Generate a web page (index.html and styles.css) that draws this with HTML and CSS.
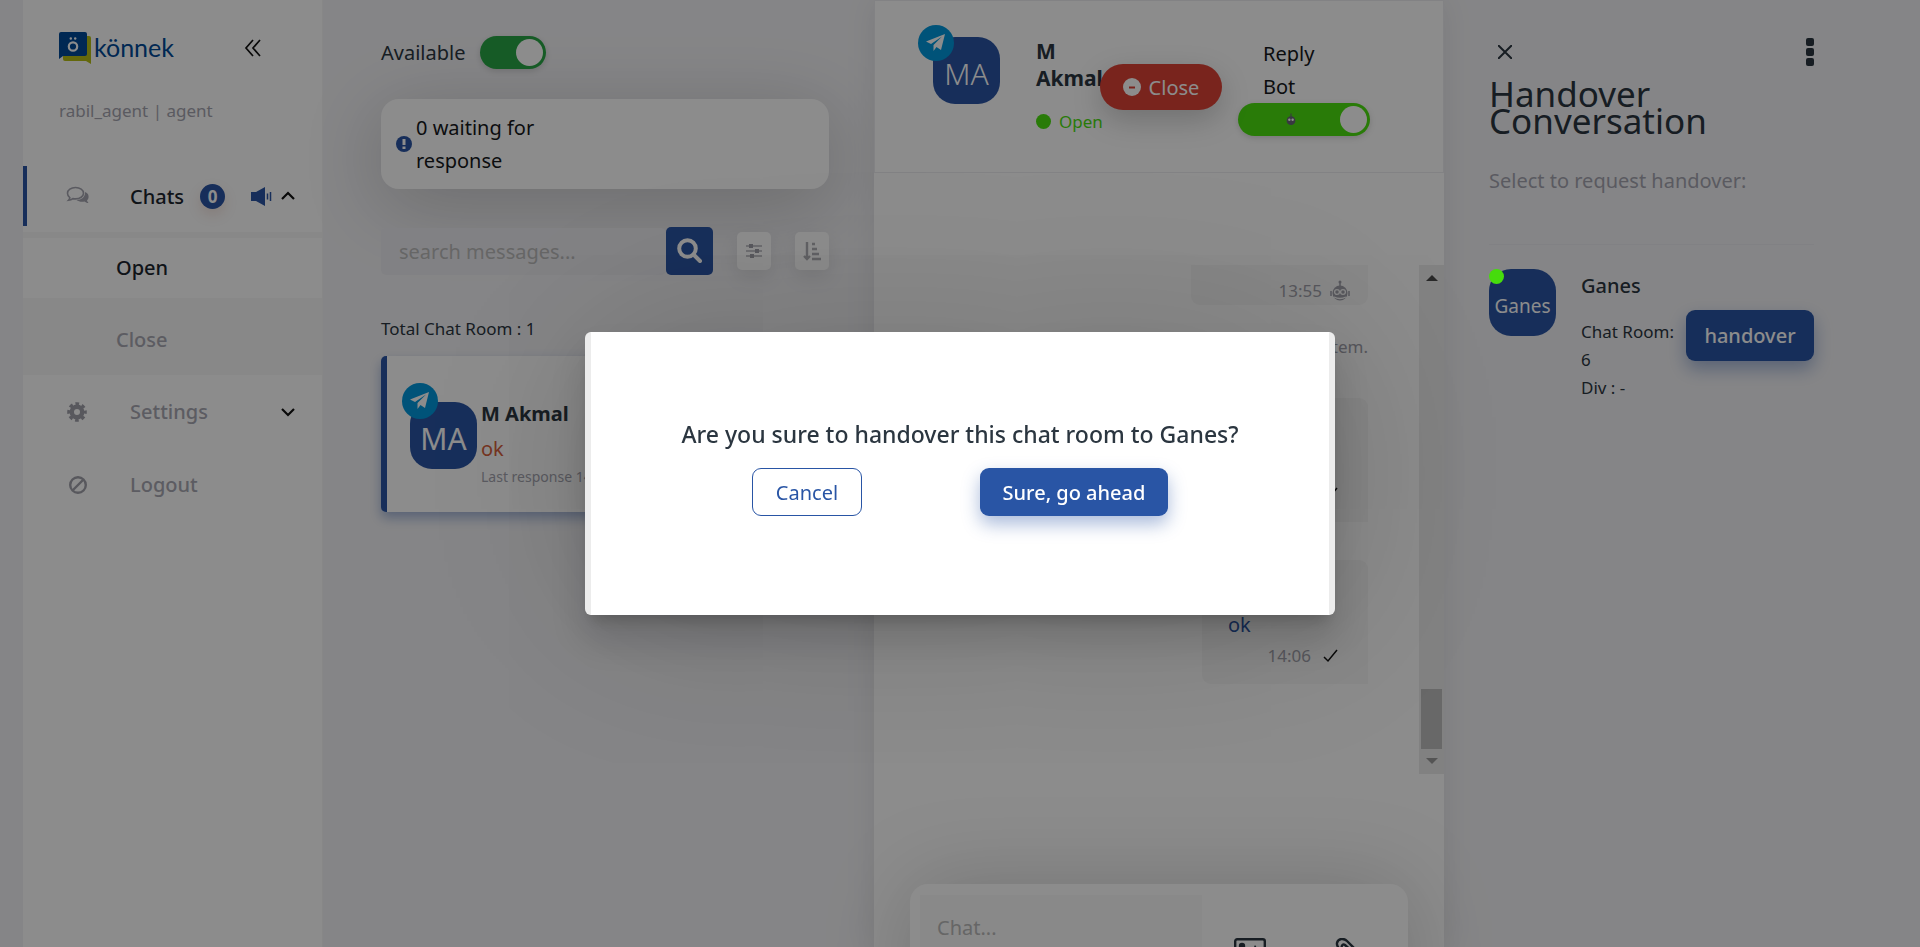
FILE: index.html
```html
<!DOCTYPE html>
<html lang="en">
<head>
<meta charset="utf-8">
<title>könnek</title>
<link rel="stylesheet" href="styles.css">
</head>
<body>
<div class="app">
  <nav class="sidebar">
    <div class="brand">
      <div class="logo">
        <svg width="32" height="32" viewBox="0 0 32 32"><path fill="#b7bd14" d="M4 4h26a2 2 0 0 1 2 2v26l-5-3H6a2 2 0 0 1-2-2z"/><path fill="#004a97" d="M2 0h24a2 2 0 0 1 2 2v20a2 2 0 0 1-2 2H4l-4 3V2a2 2 0 0 1 2-2z"/><circle cx="14" cy="14.500" r="4.200" fill="none" stroke="#fff" stroke-width="2.200"/><circle cx="11.800" cy="6.500" r="1.200" fill="#fff"/><circle cx="16.200" cy="6.500" r="1.200" fill="#fff"/></svg>
        <span class="logo-name">könnek</span>
      </div>
      <button class="plain" aria-label="Collapse menu"><svg width="17" height="18" viewBox="0 0 17 18" fill="none" stroke="#111" stroke-width="1.700"><path d="M9 1 2 9l7 8M16 1 9 9l7 8"/></svg></button>
    </div>
    <p class="whoami">rabil_agent | agent</p>
    <a class="item active" href="#">
      <svg class="item-icon" width="24" height="20" viewBox="0 0 24 20"><path fill="#a5a5b0" d="M19 6c3 1 4 3 3.500 6-.2 1-.8 1.800-1.500 2.500.2 1 .8 1.800 1.500 2.500-1.800 0-3-.6-4-1.500-3 .6-6 .1-8-1.500 5 0 9-3 8.500-8z"/><path fill="#fff" stroke="#a5a5b0" stroke-width="1.600" d="M9.500 1.500c4.500 0 8 2.500 8 5.700s-3.500 5.700-8 5.700c-1 0-1.800-.1-2.600-.3C5.700 13.600 4.200 14.200 2.500 14.300c.8-.8 1.200-1.700 1.300-2.700C2.400 10.600 1.500 9 1.500 7.200c0-3.200 3.500-5.700 8-5.700z"/></svg>
      <span class="item-text">Chats</span>
      <span class="count">0</span>
      <svg class="speaker" width="21" height="19" viewBox="0 0 21 19"><path fill="#2a55a5" d="M0 5h5l9-5v19l-9-5H0z"/><path stroke="#2a55a5" stroke-width="1.500" d="M16.500 6.500v6M19.500 5v9"/></svg>
      <svg class="chev" width="14" height="10" viewBox="0 0 14 10" fill="none" stroke="#111" stroke-width="2.200"><path d="m1 8 6-6 6 6"/></svg>
    </a>
    <div class="submenu">
      <a class="sub current" href="#">Open</a>
      <a class="sub" href="#">Close</a>
    </div>
    <a class="item settings" href="#">
      <svg class="item-icon" width="20" height="20" viewBox="0 0 20 20"><g fill="none" stroke="#a0a0aa"><circle cx="10" cy="10" r="5.200" stroke-width="4.400"/><circle cx="10" cy="10" r="8" stroke-width="3.600" stroke-dasharray="3.500 2.783" stroke-dashoffset="1.750"/></g></svg>
      <span class="item-text">Settings</span>
      <svg class="chev" width="14" height="10" viewBox="0 0 14 10" fill="none" stroke="#111" stroke-width="2.200"><path d="m1 2 6 6 6-6"/></svg>
    </a>
    <a class="item" href="#">
      <svg class="item-icon" width="20" height="20" viewBox="0 0 20 20" fill="none" stroke="#a0a0aa" stroke-width="2.400"><circle cx="11" cy="10" r="7.800"/><path d="m5.500 15.500 11-11"/></svg>
      <span class="item-text">Logout</span>
    </a>
  </nav>

  <section class="rooms">
    <label class="available">Available <input class="switch" type="checkbox" checked></label>
    <div class="waiting">
      <svg width="16" height="16" viewBox="0 0 16 16"><circle cx="8" cy="8" r="8" fill="#2a55a5"/><path stroke="#fff" stroke-width="3" d="M8 3v6M8 10.500v2.500"/></svg>
      <p>0 waiting for response</p>
    </div>
    <div class="tools">
      <input class="search" type="text" placeholder="search messages..." aria-label="Search messages">
      <button class="search-btn" aria-label="Search"><svg width="26" height="26" viewBox="0 0 26 26" fill="none" stroke="#fff" stroke-width="4"><circle cx="10.500" cy="10.500" r="8.300"/><path stroke-linecap="round" d="m17 17 6 6"/></svg></button>
      <button class="mini" aria-label="Filter"><svg width="16" height="16" viewBox="0 0 16 16"><path stroke="#b4b4ba" stroke-width="1.600" d="M0 3h16M0 8h16M0 13h16"/><path fill="#a0a0a8" d="M3 1h4v4H3zM9 6h4v4H9zM4 11h4v4H4z"/></svg></button>
      <button class="mini" aria-label="Sort"><svg width="19" height="19" viewBox="0 0 19 19" fill="none" stroke="#b0b0b6" stroke-width="2.400"><path d="M4 0v17M1 14l3 3 3-3M9 2h3M9 7h5M9 12h7M9 17h9"/></svg></button>
    </div>
    <p class="total">Total Chat Room : 1</p>
    <article class="room">
      <div class="avatar">MA<span class="tg"><svg width="20" height="18" viewBox="0 0 20 18"><path fill="#fff" d="M19 0 0 7.500l5 2.500L16 2.500 7.500 11v6l3-4 4.500 3z"/></svg></span></div>
      <div class="room-info">
        <h2>M Akmal</h2>
        <p class="last">ok</p>
        <p class="when">Last response 14:06</p>
      </div>
    </article>
  </section>

  <main class="chat">
    <header class="chat-head">
      <div class="avatar">MA<span class="tg"><svg width="20" height="18" viewBox="0 0 20 18"><path fill="#fff" d="M19 0 0 7.500l5 2.500L16 2.500 7.500 11v6l3-4 4.500 3z"/></svg></span></div>
      <div class="person">
        <h1>M Akmal</h1>
        <p class="status"><i></i>Open</p>
      </div>
      <button class="close-btn"><svg width="18" height="18" viewBox="0 0 18 18"><circle cx="9" cy="9" r="9" fill="#fff"/><path stroke="#dc3f33" stroke-width="2" d="M6 9.500h6"/></svg>Close</button>
      <label class="bot">
        <span>Reply Bot</span>
        <input class="switch wide" type="checkbox" checked>
        <svg class="bot-face" width="12" height="12" viewBox="0 0 20 22"><path stroke="#667" stroke-width="2" d="M10 1v6"/><circle cx="10" cy="14" r="8" fill="#667"/><circle cx="7" cy="12.500" r="2.200" fill="#fff"/><circle cx="13" cy="12.500" r="2.200" fill="#fff"/></svg>
      </label>
    </header>
    <div class="thread">
      <div class="messages">
        <div class="bubble bot-msg"><p class="meta">13:55 <svg width="20" height="22" viewBox="0 0 20 22"><path stroke="#a0a0aa" stroke-width="1.500" d="M10 2v5M1 11v5M19 11v5"/><circle cx="10" cy="2" r="1.500" fill="#a0a0aa"/><circle cx="10" cy="13" r="7.500" fill="#a0a0aa"/><g fill="#a0a0aa" stroke="#f7f7f7" stroke-width="1.300"><circle cx="7" cy="12" r="2.400"/><circle cx="13" cy="12" r="2.400"/><path d="M4 17q6 3 12 0"/></g></svg></p></div>
        <p class="system">You have been assigned by system.</p>
        <div class="bubble"><p>ok</p><p class="meta">14:05 <svg width="16" height="14" viewBox="0 0 16 14" fill="none" stroke="#111" stroke-width="1.500"><path d="m1 8 4 4L14 1"/></svg></p></div>
        <div class="bubble"><p>ok</p><p class="meta">14:06 <svg width="16" height="14" viewBox="0 0 16 14" fill="none" stroke="#111" stroke-width="1.500"><path d="m1 8 4 4L14 1"/></svg></p></div>
      </div>
      <div class="scroll">
        <svg width="12" height="6" viewBox="0 0 12 6"><path fill="#4a4a4a" d="m0 6 6-6 6 6z"/></svg>
        <span class="thumb"></span>
        <svg width="12" height="6" viewBox="0 0 12 6"><path fill="#999" d="m0 0 6 6 6-6z"/></svg>
      </div>
    </div>
    <div class="composer">
      <div class="composer-card">
        <textarea placeholder="Chat..." aria-label="Message"></textarea>
        <button class="plain" aria-label="Send image"><svg width="32" height="26" viewBox="0 0 32 26"><rect x="1.200" y="1.200" width="29.600" height="23.600" rx="2" fill="none" stroke="#2b3640" stroke-width="2.400"/><circle cx="8" cy="8" r="3.200" fill="#2b3640"/><path fill="#2b3640" d="m4 22 8-8 4 3 5-10 7 10v5z"/></svg></button>
        <button class="plain" aria-label="Attach file"><svg width="28" height="30" viewBox="0 0 28 30" fill="none" stroke="#2b3640" stroke-width="2.400"><path d="M22 12 13 3C10 0 4 0 3 5c-.5 3 1 4.500 3 6.500l13 13c2 2 5 1 6-1s0-4-1-5L11 7c-2-1.500-4 .5-3 3l9 9"/></svg></button>
      </div>
    </div>
  </main>

  <aside class="handover">
    <div class="bar">
      <button class="plain" aria-label="Close panel"><svg width="14" height="14" viewBox="0 0 14 14" stroke="#2b3640" stroke-width="2"><path d="m0 0 14 14M14 0 0 14"/></svg></button>
      <button class="plain" aria-label="More"><svg width="8" height="28" viewBox="0 0 8 28" fill="#2b3640"><rect width="8" height="8" rx="2"/><rect y="10" width="8" height="8" rx="2"/><rect y="20" width="8" height="8" rx="2"/></svg></button>
    </div>
    <h2 class="title">Handover Conversation</h2>
    <p class="hint">Select to request handover:</p>
    <div class="agent">
      <div class="avatar name">Ganes<i class="online"></i></div>
      <div class="agent-info">
        <h3>Ganes</h3>
        <p>Chat Room: 6</p>
        <p>Div : -</p>
      </div>
      <button class="primary">handover</button>
    </div>
  </aside>
</div>

<div class="overlay">
  <div class="modal" role="dialog" aria-modal="true" aria-labelledby="ask">
    <h2 id="ask">Are you sure to handover this chat room to Ganes?</h2>
    <div class="actions">
      <button class="cancel">Cancel</button>
      <button class="primary">Sure, go ahead</button>
    </div>
  </div>
</div>
</body>
</html>
```
FILE: styles.css
```css
* { box-sizing: border-box; }
body {
  margin: 0;
  background: #f3f3f6;
  color: #2b3640;
  font: 20px/33px "Noto Sans", sans-serif;
  overflow: hidden;
}
p, h1, h2, h3 { margin: 0; }
button, input, textarea { font: inherit; color: inherit; }
button { border: 0; padding: 0; cursor: pointer; }
a { color: inherit; text-decoration: none; }
svg { display: block; flex: none; }
.plain { background: none; }

.app {
  display: grid;
  grid-template-columns: 300px minmax(0, 551fr) minmax(0, 570fr) minmax(0, 476fr);
  height: 100vh;
  padding-left: 23px;
}

/* Sidebar */
.sidebar { background: #fff; border-right: 1px solid #f6f6f6; }
.brand {
  display: flex;
  align-items: center;
  justify-content: space-between;
  padding: 32px 61px 0 36px;
}
.logo { display: flex; gap: 3px; }
.logo-name { font: 400 25px/30px Lato, sans-serif; color: #004a97; }
.whoami { padding: 30px 0 0 36px; font-size: 17px; color: #a5a5b0; }
.item {
  display: flex;
  align-items: center;
  height: 73px;
  padding: 0 27px 0 44px;
  color: #a8a8b2;
  font-weight: 500;
}
.item-icon { margin-right: 43px; }
.item.active {
  height: 60px;
  margin: 39px 0 6px;
  padding-left: 39px;
  border-left: 4px solid #2a55a5;
  color: #1c262e;
}
.active .item-icon { margin-right: 40px; }
.count {
  width: 25px;
  height: 25px;
  margin: 0 26px 0 16px;
  border-radius: 50%;
  background: #2a55a5;
  box-shadow: 0 6px 14px rgba(160, 60, 30, .15);
  color: #fff;
  font: 700 17px/25px "Noto Sans", sans-serif;
  text-align: center;
}
.chev { margin-left: auto; }
.submenu { background: #f8f8f8; padding: 6px 0 5px; }
.sub {
  display: flex;
  align-items: center;
  height: 60px;
  margin-bottom: 12px;
  padding: 0 0 2px 93px;
  color: #a8a8b2;
  font-weight: 500;
}
.sub.current { background: #fff; color: #1c262e; }
.sub:last-child { margin-bottom: 0; }

/* Room list */
.rooms { padding: 36px 45px 0 58px; }
.available { display: flex; align-items: center; gap: 15px; }
.switch {
  appearance: none;
  flex: none;
  width: 66px;
  height: 33px;
  margin: 0;
  padding: 3px;
  border-radius: 17px;
  background: #28a745;
  box-shadow: 0 2px 6px rgba(0, 0, 0, .15);
}
.switch::before {
  content: "";
  display: block;
  width: 27px;
  height: 27px;
  margin-left: auto;
  border-radius: 50%;
  background: #fff;
}
.waiting {
  display: flex;
  align-items: center;
  gap: 4px;
  margin-top: 30px;
  padding: 12px 15px;
  border-radius: 18px;
  background: #fff;
  box-shadow: 0 15px 80px rgba(0, 0, 0, .2);
  color: #16191c;
}
.waiting p { width: 150px; }
.tools { display: flex; align-items: center; margin-top: 38px; }
.search {
  flex: 1;
  min-width: 0;
  height: 47px;
  padding: 0 18px;
  border: 0;
  border-radius: 5px;
  background: #ececf1;
}
.search::placeholder, textarea::placeholder { color: #bababa; opacity: 1; }
.search-btn {
  display: grid;
  place-items: center;
  width: 47px;
  height: 48px;
  border-radius: 5px;
  background: #2a55a5;
}
.mini {
  display: grid;
  place-items: center;
  width: 34px;
  height: 38px;
  margin-left: 24px;
  border-radius: 5px;
  background: #fff;
  box-shadow: 0 8px 20px rgba(0, 0, 0, .08);
}
.total { margin-top: 37px; font-size: 17px; }
.room {
  display: flex;
  align-items: center;
  gap: 4px;
  height: 156px;
  margin-top: 11px;
  padding-left: 23px;
  border-left: 6px solid #2a55a5;
  border-radius: 5px;
  background: #fff;
  box-shadow: 0 6px 12px rgba(42, 85, 165, .4);
}
.room .avatar { margin-top: 3px; }
.avatar {
  position: relative;
  flex: none;
  width: 67px;
  height: 67px;
  border-radius: 22px;
  background: #2a55a5;
  color: #fff;
  font: 30px/74px "Noto Sans", sans-serif;
  text-align: center;
}
.tg {
  position: absolute;
  left: -8px;
  top: -19px;
  display: grid;
  place-items: center;
  width: 36px;
  height: 36px;
  border-radius: 50%;
  background: #0098dc;
}
.room-info { padding-top: 16px; }
.room-info h2 { font-size: 20px; line-height: 36px; }
.last { color: #d6603c; line-height: 34px; }
.when { font-size: 14px; line-height: 22px; color: #a5a5b0; }

/* Conversation */
.chat {
  display: flex;
  flex-direction: column;
  height: 100vh;
  background: #fff;
  box-shadow: 0 0 30px rgba(0, 0, 0, .08);
}
.chat-head {
  display: flex;
  align-items: flex-start;
  flex: none;
  height: 173px;
  padding: 27px 73px 0 58px;
  border: 1px solid #ededf0;
}
.chat-head .avatar { margin-top: 9px; font-weight: 300; }
.chat-head .tg { left: -15px; top: -12px; }
.person { width: 64px; margin-left: 36px; padding-top: 10px; }
.person h1 { width: 90px; font-size: 21px; line-height: 27px; }
.status {
  display: flex;
  align-items: center;
  gap: 8px;
  margin-top: 13px;
  font-size: 17px;
  color: #4be010;
}
.status i { flex: none; width: 15px; height: 15px; border-radius: 50%; background: #4be010; }
.close-btn {
  z-index: 1;
  display: flex;
  align-items: center;
  justify-content: center;
  gap: 8px;
  flex: none;
  width: 122px;
  height: 46px;
  margin-top: 36px;
  border-radius: 23px;
  background: #dc4236;
  box-shadow: 0 10px 30px rgba(0, 0, 0, .2);
  color: #fff;
}
.bot {
  position: relative;
  width: 132px;
  margin-left: auto;
  padding-top: 9px;
  color: #16191c;
}
.bot span { display: block; width: 60px; margin-left: 25px; }
.switch.wide { display: block; width: 132px; background: #4be010; }
.bot-face { position: absolute; left: 47px; bottom: 11px; }
.thread { flex: 1; display: flex; min-height: 0; margin-top: 92px; }
.messages {
  flex: 1;
  display: flex;
  flex-direction: column;
  justify-content: flex-end;
  align-items: flex-end;
  padding: 0 51px 90px 0;
  overflow: hidden;
}
.bubble {
  flex: none;
  width: 166px;
  height: 124px;
  margin-top: 38px;
  padding: 49px 26px 0;
  border-radius: 9px 9px 0 9px;
  background: #f7f7f7;
  color: #2a55a5;
  line-height: 31px;
}
.bubble.bot-msg { width: 177px; padding: 99px 18px 0 0; border-radius: 9px; }
.meta {
  display: flex;
  align-items: center;
  justify-content: flex-end;
  gap: 12px;
  color: #a0a0aa;
  font-size: 17px;
}
.bot-msg .meta { gap: 8px; line-height: 22px; }
.bubble:not(.bot-msg) .meta { margin-right: 3px; }
.system { margin: 23px 0 -5px; font-size: 17px; line-height: 37px; color: #a0a0aa; }
.scroll {
  display: flex;
  flex-direction: column;
  align-items: center;
  width: 25px;
  padding: 10px 0;
  background: #ececec;
}
.thumb { width: 21px; height: 60px; margin: auto 0 9px; background: #bdbdbd; }
.composer { flex: 0 0 63px; min-height: 0; margin-top: 110px; padding: 0 36px; }
.composer-card {
  display: flex;
  gap: 32px;
  align-items: flex-start;
  height: 150px;
  padding: 11px 46px 0 10px;
  border-radius: 18px;
  background: #fff;
  box-shadow: 0 0 90px rgba(0, 0, 0, .18);
}
.composer-card textarea {
  flex: 1;
  min-width: 0;
  height: 120px;
  padding: 16px 17px;
  border: 0;
  background: #f9f9f9;
  resize: none;
}
.composer-card .plain { margin-top: 43px; }
.composer-card .plain:last-child { margin-left: 36px; }

/* Handover panel */
.handover { padding: 38px 106px 0 45px; }
.bar { display: flex; align-items: center; justify-content: space-between; padding-left: 9px; }
.title { margin-top: 14px; font-size: 35px; font-weight: 400; line-height: 27px; }
.hint { margin-top: 30px; color: #a5a5b0; }
.agent {
  display: flex;
  align-items: flex-start;
  margin-top: 47px;
  padding-top: 24px;
  border-top: 1px solid #ececf0;
}
.avatar.name { font-size: 19px; }
.online {
  position: absolute;
  z-index: 20;
  left: 0;
  top: 0;
  width: 15px;
  height: 15px;
  border-radius: 50%;
  background: #46dc0c;
}
.agent-info { flex: 1; margin-left: 25px; font-size: 17px; line-height: 28px; }
.agent-info h3 { margin-bottom: 15px; font-size: 20px; font-weight: 500; line-height: 34px; }
.agent-info p { width: 100px; }
.primary {
  border-radius: 9px;
  background: #2955a5;
  box-shadow: 0 8px 18px rgba(42, 85, 165, .4);
  color: #fff;
  font-weight: 500;
}
.agent .primary { flex: none; width: 128px; height: 51px; margin-top: 41px; }

/* Dialog */
.overlay {
  position: fixed;
  inset: 0;
  z-index: 10;
  display: grid;
  place-items: center;
  background: rgba(0, 0, 0, .45);
}
.modal {
  width: 750px;
  max-width: 90%;
  padding: 85px 80px 99px;
  border: solid #ececec;
  border-width: 0 6px;
  border-radius: 6px;
  background: #fff;
  box-shadow: 0 11px 15px -7px rgba(0, 0, 0, .2), 0 24px 38px 3px rgba(0, 0, 0, .14), 0 0 200px rgba(0, 0, 0, .2);
}
.modal h2 { font-size: 23px; font-weight: 500; line-height: 34px; text-align: center; }
.actions { display: flex; justify-content: space-between; padding: 17px 81px 0; }
.actions .primary { width: 188px; height: 48px; }
.cancel { width: 110px; height: 48px; border: 1px solid #2955a5; border-radius: 9px; background: #fff; color: #2955a5; }
```
